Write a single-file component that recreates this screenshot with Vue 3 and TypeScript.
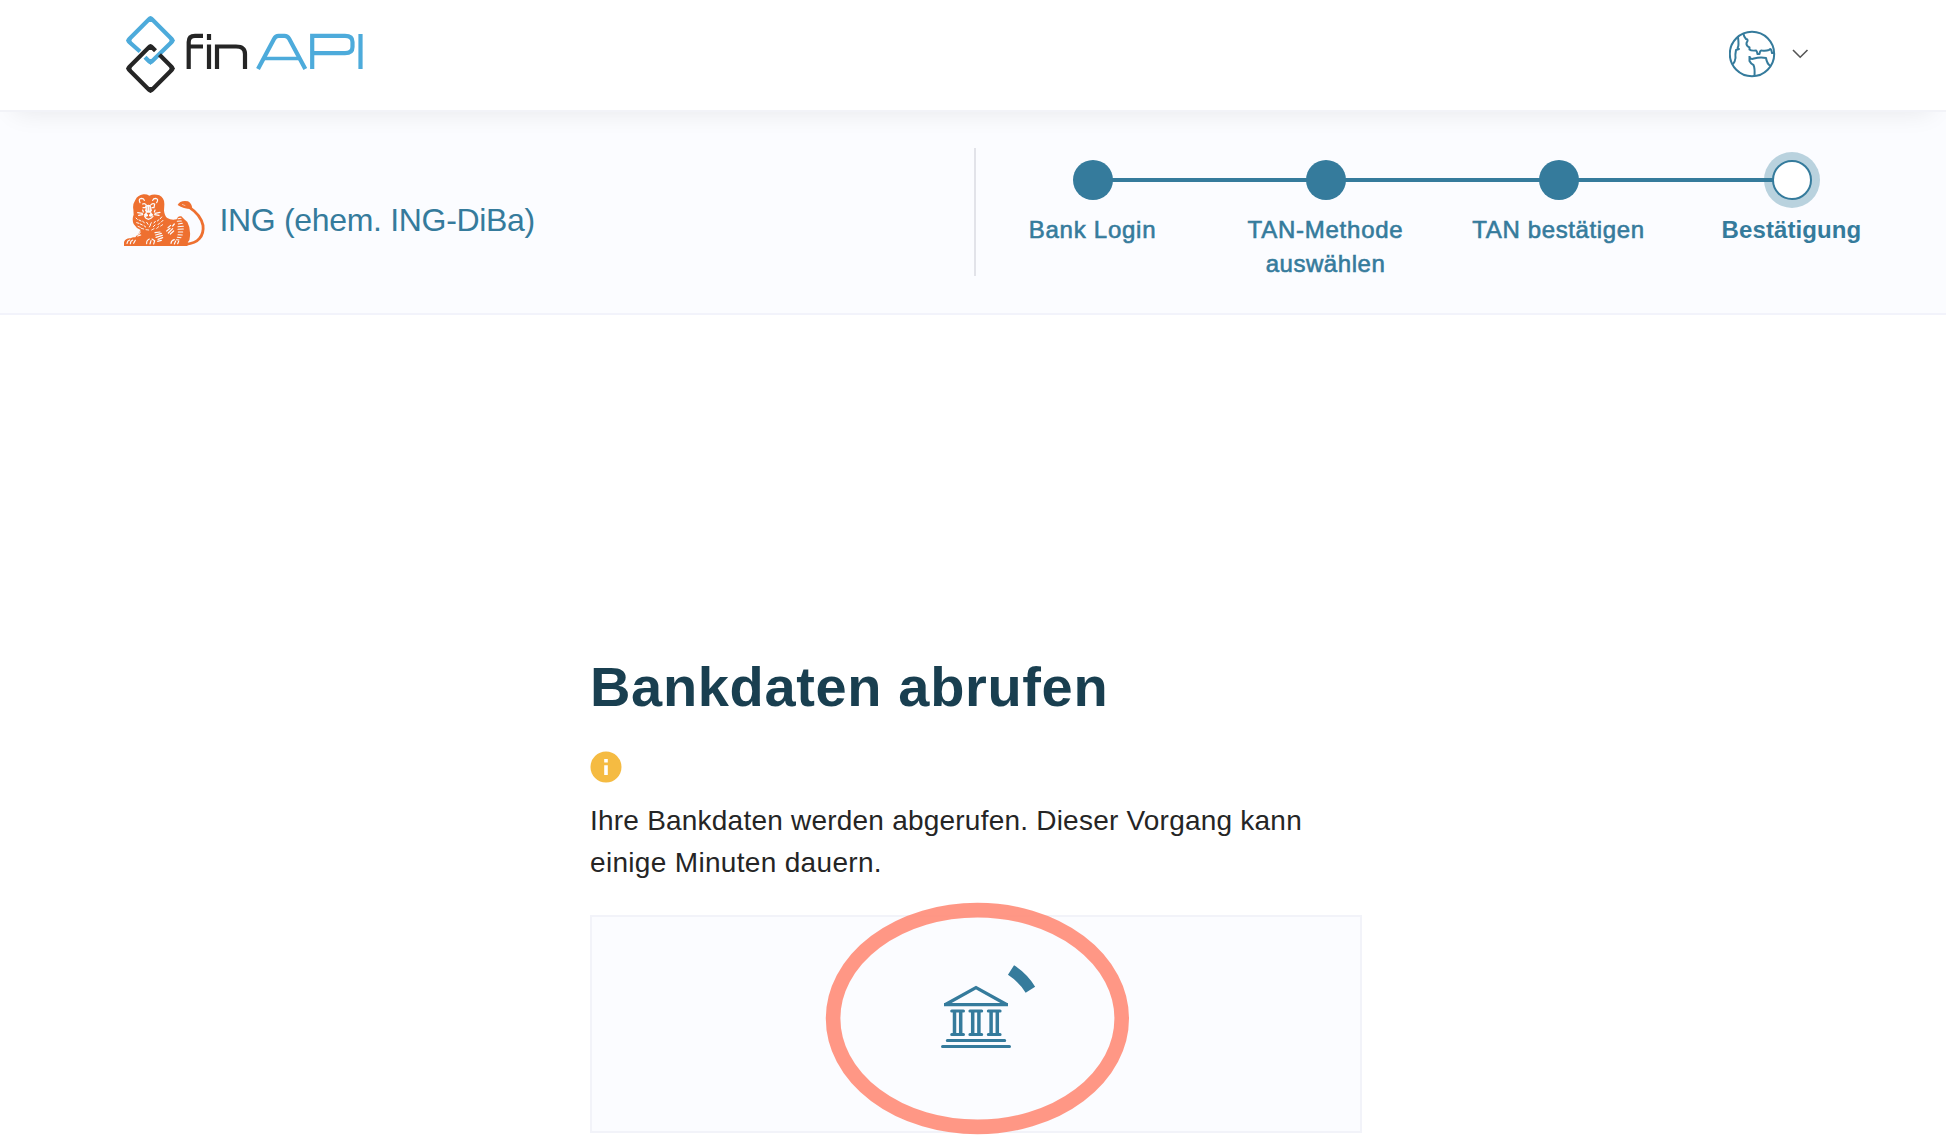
<script setup lang="ts">
interface Line { text: string; cls: string }
interface Step { lines: Line[]; active?: boolean }
const steps: Step[] = [
  { lines: [{ text: 'Bank Login', cls: 'wider' }] },
  { lines: [{ text: 'TAN-Methode', cls: 'wider' }, { text: 'auswählen', cls: 'medium' }] },
  { lines: [{ text: 'TAN bestätigen', cls: 'wide' }] },
  { lines: [{ text: 'Bestätigung', cls: 'strong' }], active: true },
]
const columns: number[] = [0, 18.2, 36.6]
</script>

<template>
  <div class="page">
    <header class="header">
      <svg class="logo" width="260" height="110" viewBox="0 0 260 110" fill="none">
        <path d="M30 51.500L19.300 42Q17.800 40.500 19.300 39L39 19.300Q40.500 17.800 42 19.300L61.700 39Q63.200 40.500 61.700 42L42 61.200Q40.500 62.700 39 61.200L35 57.200" stroke="#4dabdb" stroke-width="4.200" />
        <path d="M49.500 54.800L61.700 67Q63.200 68.500 61.700 70L42 89.700Q40.500 91.200 39 89.700L19.300 70Q17.800 68.500 19.300 67L39 47.300Q40.500 45.800 42 47.300L45.500 50.800" stroke="#252525" stroke-width="4.200" />
        <path d="M40.500 16l-5.500 6h11zM16 40.500l5.500-5.500v11zM65 40.500l-5.500-5.500v11zM40.500 65l-5.500-6h11z" fill="#4dabdb" />
        <path d="M40.500 44l-5.500 6h11zM16 68.500l5.500-5.500v11zM65 68.500l-5.500-5.500v11zM40.500 93l-5.500-6h11z" fill="#252525" />
        <g stroke="#252525" stroke-width="4.200">
          <path d="M78.700 69V42Q78.700 35.900 85 35.900H93M76.700 46.500H93" />
          <path d="M99 69V44.500M99 40V34M107 69V46.500H126Q135 46.500 135 54V69" />
        </g>
        <g stroke="#4dabdb" stroke-width="4.200">
          <path d="M148 69L164 39Q165.700 35.900 168.500 35.900H174.500Q177.500 35.900 179.300 39L195.300 69" />
          <path d="M153 58.500H190" stroke-width="3.600" />
          <path d="M202.200 69V35.900H235Q242.500 35.900 242.500 42V47Q242.500 53.200 235 53.200H202M250.500 69V34" />
        </g>
      </svg>
      <button class="language" aria-label="Sprache">
        <svg width="90" height="50" viewBox="0 0 90 50" fill="none" stroke="#357b9c" stroke-width="2" stroke-linejoin="round">
          <circle cx="23" cy="25" r="22.200" />
          <path d="M9 8Q10 16 9 18Q8 20 10 20L7 21Q6 26 6.500 29Q6 33 4 35" />
          <path d="M14.500 5Q15 8 17 10Q20 10 17.500 14Q17 17 20.500 18.500V20.500Q22 22 27 21.500Q28 22 28.500 25H30.500Q31 21 33 21.500Q37 22 40 21Q42 18 43 24H45" />
          <path d="M20.500 27Q21 31 25 29.500Q31 28 37 29Q38 35 41.500 37M20.500 27V32Q22 35 24.500 36Q26 39 25.500 47" />
          <path d="M64 21L71.200 28.200L78.500 21" stroke="#555" stroke-width="1.600" stroke-linejoin="miter" />
        </svg>
      </button>
    </header>

    <section class="banner">
      <div class="bank">
        <svg class="lion" width="84" height="56" viewBox="36 42 252 168">
          <path d="M42 198V186Q48 173 62 175Q68 170 76 172L92 150Q78 144 71 132Q65 118 71 104L70 88Q67 74 76 60Q82 46 100 43Q110 42 118 47Q132 40 148 46Q164 54 163 74L162 92Q164 108 172 114Q184 122 200 118Q204 106 214 109Q222 118 232 126Q242 144 240 168Q240 180 234 186L232 198Z" fill="#ee7030" />
          <path d="M228 193Q256 190 268 176Q282 160 279 136Q272 104 238 82" fill="none" stroke="#ee7030" stroke-width="8.500" />
          <path d="M203 75Q210 60 234 64Q246 70 247 87Q222 88 203 75Z" fill="#ee7030" />
          <path d="M216 73L226 77" stroke="#fbfcff" stroke-width="1.600" />
          <g fill="none" stroke="#fbfcff" stroke-width="3.600" stroke-linecap="round">
            <path d="M90 68Q84 56 95 55Q102 56 103 61M128 61Q130 55 137 55Q147 57 140 68" />
            <path d="M98 72Q104 68 109 75L106 83H99M122 75Q127 68 134 72L132 83H126" />
            <path d="M110 80L107 92M121 80L124 92" />
            <path d="M83 98L97 100M86 106L98 104M135 100L150 97M134 104L147 106M100 96L98 90M133 96L135 90" />
            <path d="M104 109L108 115L115 118L123 115L129 109" />
            <path d="M78 114L82 118M87 120L93 123M98 124L103 128M110 127L114 133M124 128L121 134M136 124L132 129M147 119L142 123M155 111L151 116" stroke-width="3" />
            <path d="M80 128L87 130M91 132L97 135M102 137L107 141M118 141L121 136M130 140L135 135M144 134L149 129M154 126L159 121" stroke-width="3" />
            <path d="M84 139L91 142M94 145L101 147M108 149L116 150M125 150L132 146M140 145L146 140M152 138L158 134" stroke-width="2.600" />
            <path d="M79 158L91 156M77 165L88 161M83 168L92 165" />
            <path d="M135 158L150 156M137 165L154 160M138 172L157 166M144 178L158 173M143 184L154 181" />
            <path d="M174 143L182 136M170 153L180 145M175 159L188 146M181 162L191 153M188 138L193 132" />
            <path d="M204 116L213 115M202 124L214 123M205 132L217 130M204 140L220 139M204 148L220 147M205 156L218 156M204 164L217 165M202 172L213 173M199 179L207 180" stroke-width="3.200" />
            <path d="M51 190Q52 182 59 180M61 191Q61 183 68 180M71 190L76 181M110 191Q109 181 118 177M120 192L123 182M131 192L134 182L126 177M183 190Q184 181 193 179M193 192L197 183M203 191L206 184" stroke-width="3.400" />
          </g>
          <path d="M109 76L115.500 74L122 76L124 98L130 105L122 112L115 109L108 112L101 105L107 98Z" fill="#fbfcff" />
          <path d="M109 98H122L117 105V109L123 110L115.500 113L108 110L114 109V105Z" fill="#ee7030" />
          <path d="M112 80V92M119 80V92" stroke="#ee7030" stroke-width="1.500" />
        </svg>
        <span class="bank-name">ING (ehem. ING-DiBa)</span>
      </div>
      <ol class="steps">
        <li v-for="(s, i) in steps" :key="i" class="step" :class="{ active: s.active }">
          <i class="dot"></i>
          <div class="label"><div v-for="l in s.lines" :key="l.text" :class="l.cls">{{ l.text }}</div></div>
        </li>
      </ol>
    </section>

    <main class="content">
      <h1>Bankdaten abrufen</h1>
      <svg class="info" width="32" height="32" viewBox="0 0 32 32">
        <circle cx="16" cy="16" r="15.500" fill="#f5bb42" />
        <path d="M14.200 8h3.600v3.600h-3.600zM14.200 14.300h3.600v9.700h-3.600z" fill="#fff" />
      </svg>
      <p><span class="first">Ihre Bankdaten werden abgerufen. Dieser Vorgang kann</span><br><span class="second">einige Minuten dauern.</span></p>
      <div class="card">
        <svg class="loader" width="144" height="144" viewBox="904 952 144 144" fill="none" stroke="#357b9c">
          <path d="M1011 970A64.400 64.400 0 0 1 1030.400 989.700" stroke-width="11.200" />
          <path d="M945.500 1004.500L976 987.700L1006.500 1004.500ZM944 1004.700H1008" stroke-width="3.200" />
          <g v-for="x in columns" :key="x" :transform="`translate(${x} 0)`" stroke-width="3">
            <path d="M951.700 1011H963.500M951.700 1034.500H963.500" stroke-linecap="round" />
            <path d="M954.500 1011V1034.500M960.700 1011V1034.500" stroke-width="3.500" />
          </g>
          <path d="M947.300 1040.600H1004.700M942.500 1046.600H1009.500" stroke-width="3" stroke-linecap="round" />
        </svg>
        <svg class="marker" width="304" height="233" viewBox="0 0 304 233" fill="none">
          <ellipse cx="152.400" cy="116.500" rx="144.300" ry="108.400" stroke="#ff8e7b" stroke-opacity=".92" stroke-width="14.600" />
        </svg>
      </div>
    </main>
  </div>
</template>

<style>
body { margin: 0; background: #fff; overflow: hidden; }
</style>

<style scoped>
.page { width: 1946px; height: 1144px; overflow: hidden; font-family: "Liberation Sans", Arial, sans-serif; background: #fff; }
.header { height: 110px; border-bottom: 2px solid #f2f3f8; background: #fff; display: flex; justify-content: space-between; padding: 0 127px 0 110px; position: relative; box-shadow: 0 14px 24px -14px rgba(0, 0, 0, .085); }
.logo { display: block; }
.language { border: 0; padding: 0; background: none; width: 90px; height: 50px; margin-top: 29px; }
.language svg { display: block; }
.banner { height: 201px; border-bottom: 2px solid #f2f3fb; background: #fbfcff; display: flex; }
.bank { width: 974px; padding-left: 122px; box-sizing: border-box; display: flex; align-items: flex-start; padding-top: 82px; }
.lion { flex: none; display: block; }
.bank-name { color: #357b9c; font-size: 32px; line-height: 36px; margin: 8px 0 0 13.500px; white-space: nowrap; letter-spacing: -.32px; }
.steps { list-style: none; margin: 36px 0 0; padding: 0; height: 128px; border-left: 2px solid #e2e3e9; display: flex; }
.step { width: 233px; padding-top: 12px; display: flex; flex-direction: column; align-items: center; position: relative; }
.step + .step::before { content: ""; position: absolute; top: 30px; right: 50%; width: 233px; height: 4px; background: #357b9c; }
.dot { flex: none; width: 40px; height: 40px; border-radius: 50%; background: #357b9c; position: relative; z-index: 1; }
.active .dot { box-sizing: border-box; background: #fff; border: 2px solid #357b9c; box-shadow: 0 0 0 8px rgba(53, 123, 156, .33); }
.label { flex: none; margin-top: 13px; font-size: 24px; line-height: 34px; text-align: center; color: #357b9c; -webkit-text-stroke: .6px #357b9c; white-space: nowrap; }
.wider { letter-spacing: .75px; }
.wide { letter-spacing: .62px; }
.medium { letter-spacing: .55px; }
.strong { letter-spacing: .1px; }
.active .label { font-weight: 700; -webkit-text-stroke: 0; }
.content { width: 772px; margin-left: 590px; padding-top: 340px; }
h1 { margin: 0; font-size: 56px; line-height: 64px; color: #193f50; white-space: nowrap; letter-spacing: .65px; }
.info { display: block; margin-top: 32px; }
p { margin: 17px 0 0; font-size: 28px; line-height: 42px; color: #252525; white-space: nowrap; }
.first { letter-spacing: .22px; }
.second { letter-spacing: .32px; }
.card { height: 218px; box-sizing: border-box; border: 2px solid #f2f3f9; background: #fbfcff; margin-top: 31px; display: flex; justify-content: center; align-items: center; position: relative; }
.marker { position: absolute; left: 233px; top: -15px; }
</style>
